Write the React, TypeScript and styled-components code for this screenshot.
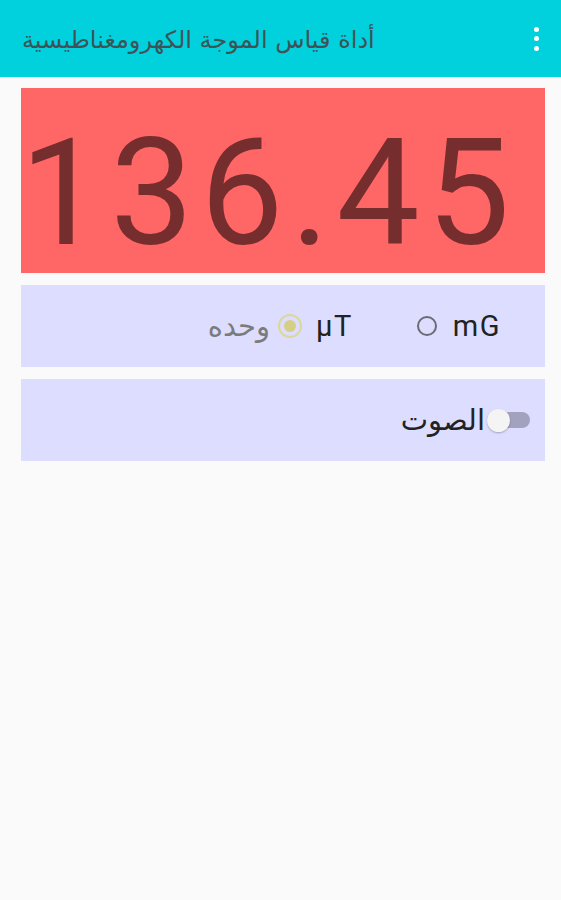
import styled, { createGlobalStyle } from "styled-components";

const GlobalStyle = createGlobalStyle`
  html, body {
    margin: 0;
    padding: 0;
    background: #fafafa;
  }
  body {
    font-family: Roboto, "DejaVu Sans", sans-serif;
  }
`;

const Screen = styled.div`
  width: 561px;
  min-height: 900px;
  background: #fafafa;
`;

const AppBar = styled.header`
  height: 77px;
  background: #00d1dc;
  display: flex;
  align-items: center;
  justify-content: space-between;
  padding: 0 22px 0 22px;
  box-sizing: border-box;
`;

const Title = styled.h1`
  margin: 2px 0 0;
  font-family: "DejaVu Sans", sans-serif;
  font-weight: 400;
  font-size: 24px;
  color: #3e5358;
  direction: rtl;
`;

const MenuButton = styled.div`
  width: 6px;
  height: 24px;
  display: flex;
  flex-direction: column;
  justify-content: space-between;
  align-items: center;
`;

const Dot = styled.span`
  width: 5px;
  height: 5px;
  border-radius: 50%;
  background: #ffffff;
`;

const Content = styled.main`
  display: flex;
  flex-direction: column;
  gap: 12px;
  padding: 11px 16px 0 21px;
`;

const Reading = styled.div`
  height: 185px;
  box-sizing: border-box;
  padding-top: 26px;
  background: #ff6666;
  display: flex;
  align-items: center;
`;

const ReadingValue = styled.span`
  font-family: Roboto, sans-serif;
  font-size: 148px;
  line-height: 148px;
  letter-spacing: 7px;
  color: #762d2d;
  margin-left: -1px;
`;

const Card = styled.div<{ $pad: number }>`
  height: 82px;
  background: #ddddff;
  display: flex;
  align-items: center;
  justify-content: flex-end;
  padding-right: ${p => p.$pad}px;
`;

const UnitLabel = styled.span`
  font-family: "DejaVu Sans", sans-serif;
  font-size: 29px;
  color: #7b7b7b;
  margin-right: 8px;
  direction: rtl;
`;

const Option = styled.label<{ $gap: number }>`
  display: flex;
  align-items: center;
  gap: ${p => p.$gap}px;
  font-family: Roboto, sans-serif;
  font-size: 29px;
  letter-spacing: 1.5px;
  color: #222222;
`;

const Radio = styled.span<{ $checked?: boolean }>`
  box-sizing: border-box;
  width: ${p => (p.$checked ? 24 : 20)}px;
  height: ${p => (p.$checked ? 24 : 20)}px;
  border-radius: 50%;
  border: 2px solid ${p => (p.$checked ? "#dcd79a" : "#6b6b72")};
  display: flex;
  align-items: center;
  justify-content: center;
  &::after {
    content: "";
    display: ${p => (p.$checked ? "block" : "none")};
    width: 12px;
    height: 12px;
    border-radius: 50%;
    background: #d5cf84;
  }
`;

const Spacer = styled.span<{ $w: number }>`
  width: ${p => p.$w}px;
`;

const SoundLabel = styled.span`
  font-family: "DejaVu Sans", sans-serif;
  font-size: 29px;
  color: #222222;
  direction: rtl;
  margin-right: 2px;
`;

const Switch = styled.span`
  position: relative;
  width: 43px;
  height: 16px;
  border-radius: 8px;
  background: #a2a2bf;
`;

const Thumb = styled.span`
  position: absolute;
  left: 0;
  top: 50%;
  width: 23px;
  height: 23px;
  margin-top: -11.5px;
  border-radius: 50%;
  background: #f4f4f4;
  box-shadow: 0 1px 2px rgba(0, 0, 0, 0.25);
`;

export default function App() {
  return (
    <Screen>
      <GlobalStyle />
      <AppBar>
        <Title>أداة قياس الموجة الكهرومغناطيسية</Title>
        <MenuButton>
          <Dot />
          <Dot />
          <Dot />
        </MenuButton>
      </AppBar>
      <Content>
        <Reading>
          <ReadingValue>136.45</ReadingValue>
        </Reading>
        <Card $pad={44}>
          <UnitLabel>وحده</UnitLabel>
          <Option $gap={14}>
            <Radio $checked />
            µT
          </Option>
          <Spacer $w={64} />
          <Option $gap={16}>
            <Radio />
            mG
          </Option>
        </Card>
        <Card $pad={15}>
          <SoundLabel>الصوت</SoundLabel>
          <Switch>
            <Thumb />
          </Switch>
        </Card>
      </Content>
    </Screen>
  );
}
